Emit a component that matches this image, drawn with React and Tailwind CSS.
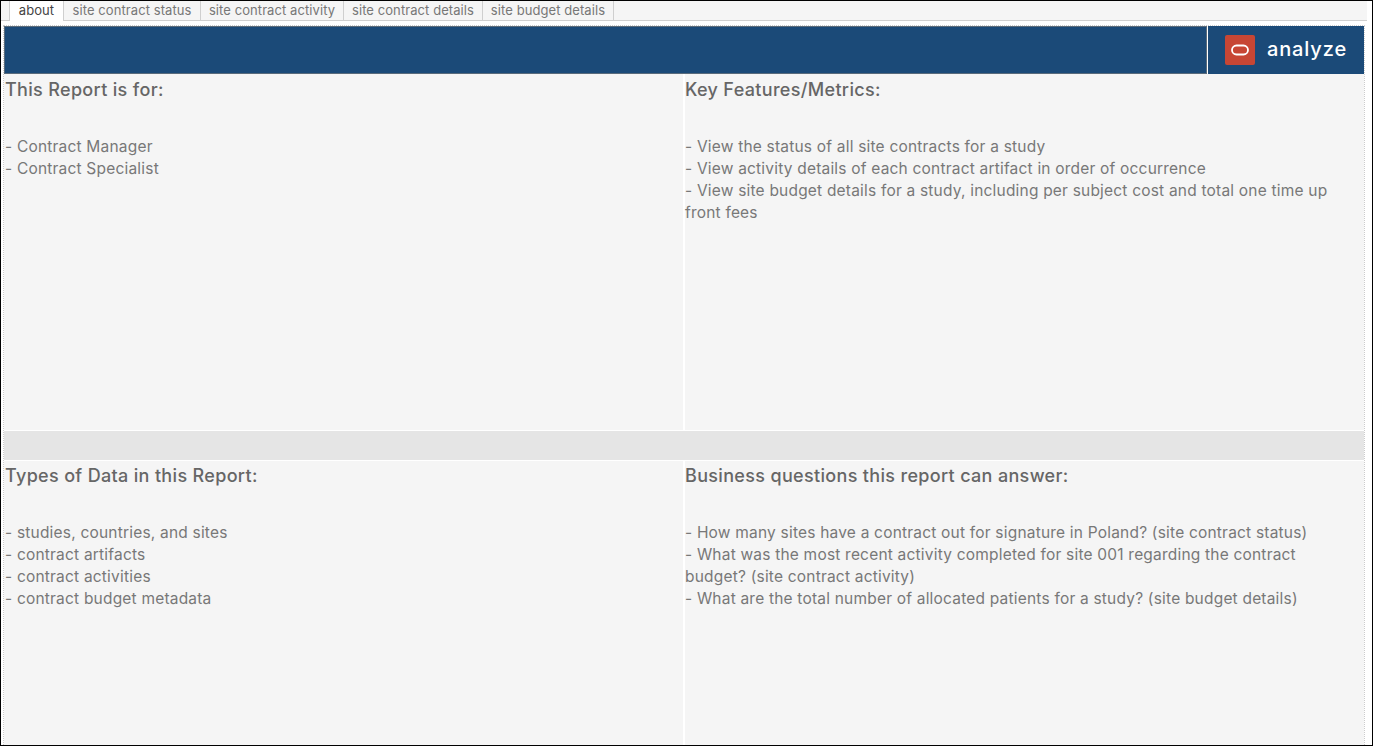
const Panel = ({ title, lines, className }) => (
  <div className={`h-full bg-[#f5f5f5] text-[#787878] ${className}`}>
    <h2 className="text-[18px] leading-[22px] font-medium tracking-[0.33px] text-[#666666]">{title}</h2>
    <div className="mt-[35px] text-[15.5px] leading-[22px] tracking-[0.2px]">
      {lines.map((line) => (
        <p key={line}>{line}</p>
      ))}
    </div>
  </div>
);

const App = () => {
  return (
    <div className="flex h-[746px] w-[1373px] flex-col overflow-hidden border border-black bg-white font-['Inter',sans-serif]">
      {/* Tabs */}
      <div className="mr-[5px] flex h-[20px] shrink-0 border-b border-[#cfcfcf] bg-[#f5f5f5] pl-[8px] text-[13px] leading-[19px] tracking-[0.08px]">
        <div className="h-[20px] w-[55px] border-r border-l border-[#cfcfcf] bg-white text-center text-[#444444]">about</div>
        <div className="w-[137px] border-r border-[#cfcfcf] text-center text-[#777777]">site contract status</div>
        <div className="w-[143px] border-r border-[#cfcfcf] text-center text-[#777777]">site contract activity</div>
        <div className="w-[139px] border-r border-[#cfcfcf] text-center text-[#777777]">site contract details</div>
        <div className="w-[131px] border-r border-[#cfcfcf] text-center text-[#777777]">site budget details</div>
      </div>

      <div className="flex min-h-0 flex-1 flex-col pt-[4px] pr-[7px] pl-[2px]">
        <div className="flex min-h-0 flex-1 flex-col border border-b-0 border-dotted border-[#cccccc]">
          {/* Banner */}
          <div className="flex h-[48px] shrink-0 bg-[#1b4a78]">
            <div className="flex-1 border border-[#5a6b7b]" />
            <div className="flex w-[157px] items-center border-l border-white pl-[17px]">
              <div className="flex h-[30px] w-[30px] items-center justify-center rounded-[2px] bg-[#c74634]">
                <svg width="18" height="12" viewBox="0 0 18 12" fill="none">
                  <rect x="1" y="1.5" width="16" height="9" rx="4.5" stroke="#ffffff" strokeWidth="1.8" />
                </svg>
              </div>
              <span className="mb-[2px] ml-[12px] text-[20px] leading-none font-medium tracking-[0.85px] text-white">analyze</span>
            </div>
          </div>

          {/* Top row */}
          <div className="flex h-[356px] shrink-0 gap-[2px]">
            <Panel
              className="w-[679px] pt-[5px] pl-[1px]"
              title="This Report is for:"
              lines={['- Contract Manager', '- Contract Specialist']}
            />
            <Panel
              className="flex-1 pt-[5px] pr-[10px]"
              title="Key Features/Metrics:"
              lines={[
                '- View the status of all site contracts for a study',
                '- View activity details of each contract artifact in order of occurrence',
                '- View site budget details for a study, including per subject cost and total one time up front fees',
              ]}
            />
          </div>

          {/* Separator band */}
          <div className="my-[1px] h-[29px] shrink-0 bg-[#e5e5e5]" />

          {/* Bottom row */}
          <div className="flex min-h-0 flex-1 gap-[2px]">
            <Panel
              className="w-[679px] pt-[4px] pl-[1px]"
              title="Types of Data in this Report:"
              lines={['- studies, countries, and sites', '- contract artifacts', '- contract activities', '- contract budget metadata']}
            />
            <Panel
              className="flex-1 pt-[4px] pr-[10px]"
              title="Business questions this report can answer:"
              lines={[
                '- How many sites have a contract out for signature in Poland? (site contract status)',
                '- What was the most recent activity completed for site 001 regarding the contract budget? (site contract activity)',
                '- What are the total number of allocated patients for a study? (site budget details)',
              ]}
            />
          </div>
        </div>
      </div>
    </div>
  );
};

export default App;
